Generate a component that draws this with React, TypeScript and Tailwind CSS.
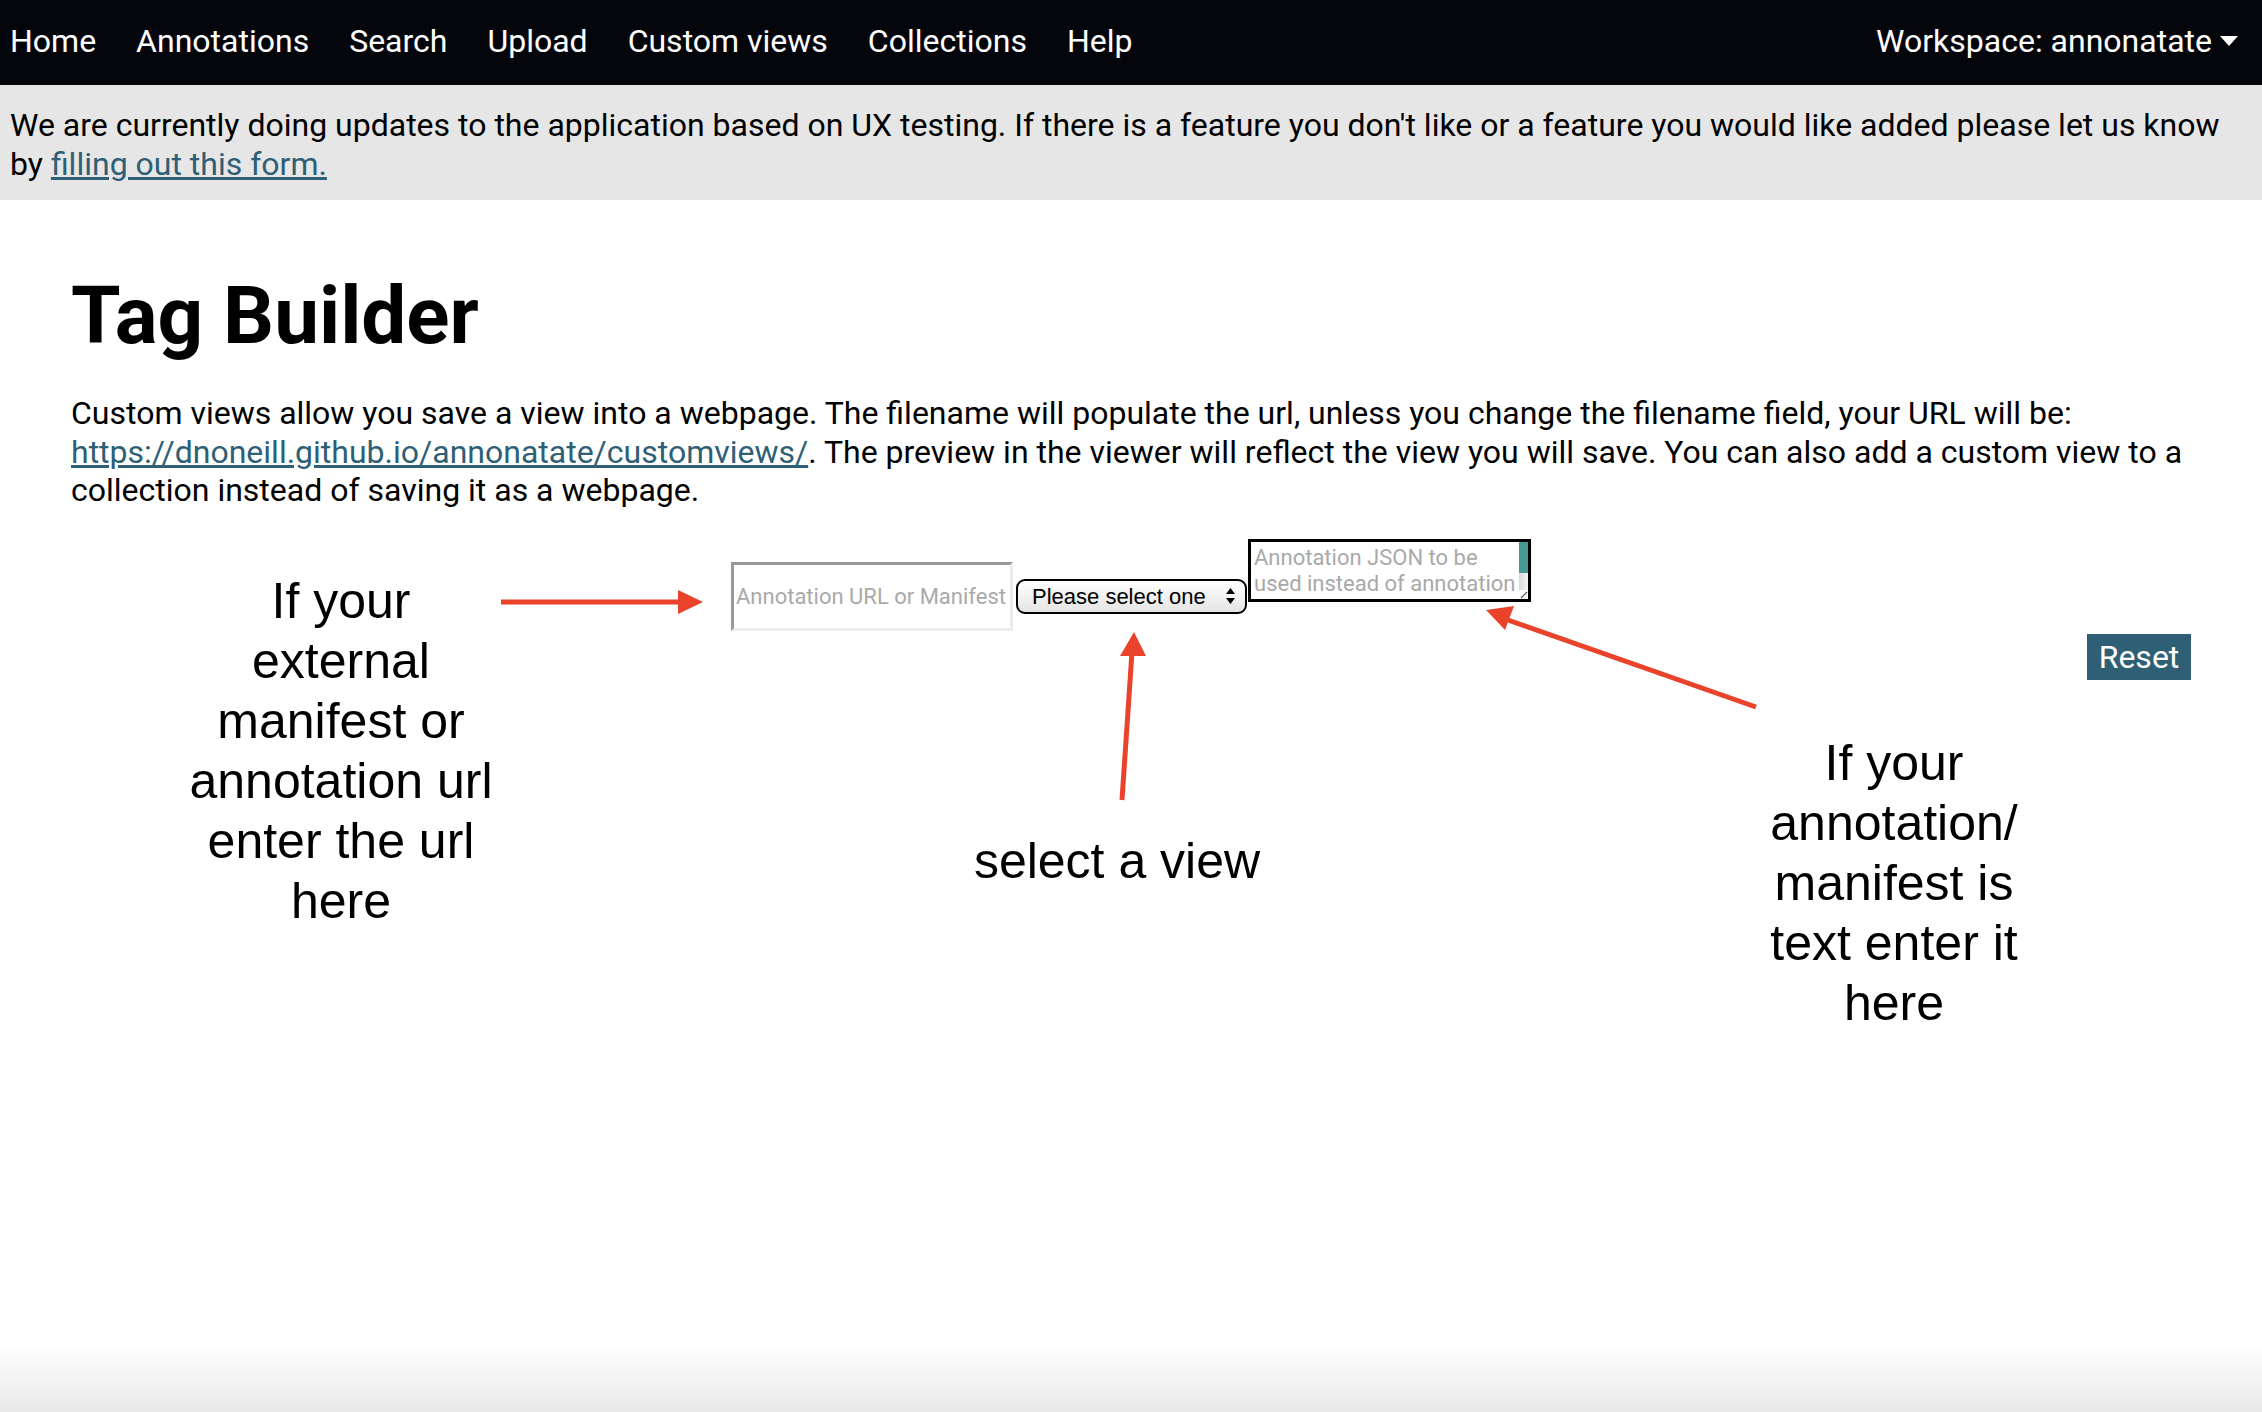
import React from "react";

const navLinks = ["Home", "Annotations", "Search", "Upload", "Custom views", "Collections", "Help"];

const Note = ({ lines, className }: { lines: string[]; className: string }) => (
  <div
    className={`absolute text-center text-[50px] leading-[60px] text-black whitespace-nowrap font-['Liberation_Sans',Arial,sans-serif] ${className}`}
  >
    {lines.map((l) => (
      <div key={l}>{l}</div>
    ))}
  </div>
);

const App = () => {
  return (
    <div className="relative min-h-screen flex flex-col bg-white font-['Roboto',Arial,sans-serif] text-black">
      {/* top nav */}
      <nav className="h-[85px] bg-[#05060b] text-white flex items-center justify-between pl-[10px] pr-[23px] pb-[3px]">
        <div className="flex items-center gap-[40px] text-[32px]">
          {navLinks.map((n) => (
            <span key={n}>{n}</span>
          ))}
        </div>
        <div className="flex items-center gap-[7px] text-[32px]">
          <span>Workspace: annonatate</span>
          <svg width="20" height="12" viewBox="0 0 20 12">
            <path d="M1 1h18L10 11z" fill="white" />
          </svg>
        </div>
      </nav>

      {/* notice */}
      <div className="bg-[#e6e6e6] px-[10px] pt-[21px] pb-[16px] text-[32px] leading-[39px]">
        We are currently doing updates to the application based on UX testing. If there is a feature you don't like or a
        feature you would like added please let us know by{" "}
        <a href="#" className="text-[#2e5f76] underline">
          filling out this form.
        </a>
      </div>

      <main className="px-[71px]">
        <h1 className="mt-[76px] text-[80px] leading-[80px] font-bold">Tag Builder</h1>
        <p className="mt-[38px] text-[32px] leading-[38.5px]">
          Custom views allow you save a view into a webpage. The filename will populate the url, unless you change the
          filename field, your URL will be:{" "}
          <a href="#" className="text-[#2e5f76] underline">
            https://dnoneill.github.io/annonatate/customviews/
          </a>
          . The preview in the viewer will reflect the view you will save. You can also add a custom view to a collection
          instead of saving it as a webpage.
        </p>

        {/* form row */}
        <div className="mt-[29px] flex justify-center items-start">
          <div className="mt-[23px] w-[282px] h-[69px] border-[3px] border-t-[#999] border-l-[#999] border-b-[#ececec] border-r-[#ececec] flex items-center px-[2px] text-[22px] text-[#a9a9a9] whitespace-nowrap overflow-hidden">
            Annotation URL or Manifest
          </div>
          <div className="mt-[40px] ml-[3px] w-[231px] h-[35px] rounded-[9px] border-2 border-black bg-gradient-to-b from-white to-[#e4e4e4] flex items-center justify-between pl-[14px] pr-[9px] text-[22px] font-['Liberation_Sans',Arial,sans-serif]">
            <span>Please select one</span>
            <svg width="11" height="18" viewBox="0 0 11 18">
              <path d="M5.5 1L10 7H1z M5.5 17L10 11H1z" fill="black" />
            </svg>
          </div>
          <div className="ml-[1px] w-[283px] h-[63px] border-[3px] border-black flex overflow-hidden">
            <div className="flex-1 px-[3px] pt-[3px] text-[22px] leading-[26px] text-[#a9a9a9] whitespace-nowrap overflow-hidden">
              <div>Annotation JSON to be</div>
              <div>used instead of annotation</div>
            </div>
            <div className="w-[9px] flex flex-col relative">
              <div className="h-[31px] bg-[#459a93]" />
              <div className="flex-1 bg-gradient-to-r from-[#d8d8d8] to-[#f2f2f2]" />
              <div className="absolute bottom-0 right-0 w-[9px] h-[9px] bg-white">
                <svg width="9" height="9" viewBox="0 0 9 9">
                  <path d="M2 8L8 2" stroke="#555" strokeWidth="1.2" />
                </svg>
              </div>
            </div>
          </div>
        </div>

        <div className="mt-[3px] flex justify-end">
          <button className="h-[46px] w-[104px] bg-[#2f5f74] text-white text-[32px] leading-none">Reset</button>
        </div>
      </main>

      <div className="mt-auto h-[70px] bg-gradient-to-b from-white to-[#e9e9e9]" />

      {/* annotations drawn over the page */}
      <svg className="absolute left-0 top-0 pointer-events-none" width="2262" height="1412" viewBox="0 0 2262 1412">
        <g stroke="#e9442b" strokeWidth="5" fill="#e9442b">
          <line x1="501" y1="602" x2="682" y2="602" />
          <polygon points="678,590 703,602 678,614" stroke="none" />
          <line x1="1122" y1="800" x2="1132" y2="652" />
          <polygon points="1120,656 1134,632 1146,656" stroke="none" />
          <line x1="1756" y1="707" x2="1505" y2="619" />
          <polygon points="1486,610 1514,606 1505,630" stroke="none" />
        </g>
      </svg>
      <Note className="left-[181px] top-[571px] w-[320px]" lines={["If your", "external", "manifest or", "annotation url", "enter the url", "here"]} />
      <Note className="left-[957px] top-[831px] w-[320px]" lines={["select a view"]} />
      <Note className="left-[1734px] top-[733px] w-[320px]" lines={["If your", "annotation/", "manifest is", "text enter it", "here"]} />
    </div>
  );
};

export default App;
